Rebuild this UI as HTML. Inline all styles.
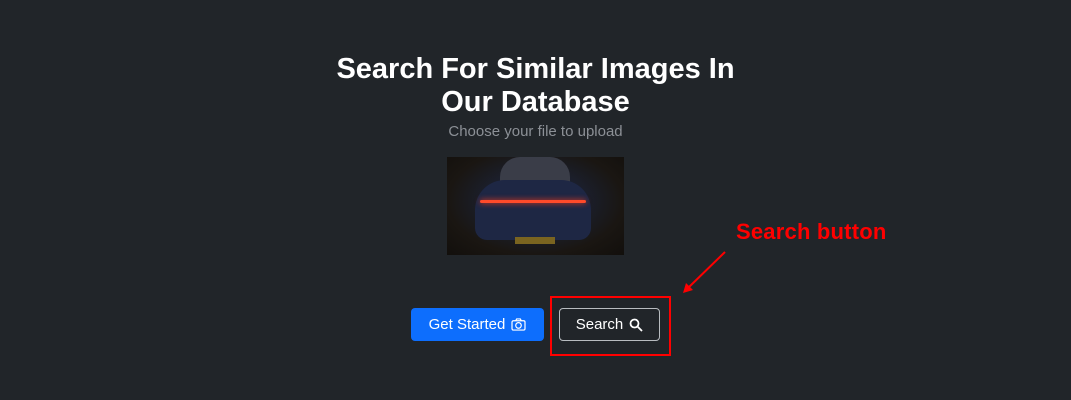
<!DOCTYPE html>
<html><head><style>
body{margin:0;width:1071px;height:400px;background:#212529;font-family:"Liberation Sans","DejaVu Sans",sans-serif;position:relative;overflow:hidden;color:#fff}
.t{position:absolute;left:0;width:1071px;text-align:center;font-weight:bold;font-size:29px;line-height:33px;top:53px}
.s{position:absolute;left:0;width:1071px;text-align:center;font-size:15px;color:#8c9096;top:123px}
.img{position:absolute;left:447px;top:157px;width:177px;height:98px;background:radial-gradient(ellipse at 50% 45%,#2a3350 0,#1b2030 35%,#1a1612 70%,#120f0c 100%)}
.win{position:absolute;left:500px;top:157px;width:70px;height:35px;border-radius:20px 20px 4px 4px;background:#3a3d48}
.car{position:absolute;left:475px;top:180px;width:116px;height:60px;border-radius:30px 30px 12px 12px;background:#1e2744}
.light{position:absolute;left:480px;top:200px;width:106px;height:3px;background:#ff4a2a;border-radius:2px;box-shadow:0 0 6px #ff3a1a}
.plate{position:absolute;left:515px;top:237px;width:40px;height:7px;background:#7a6420}
.b{position:absolute;top:308px;height:33px;border-radius:4px;box-sizing:border-box;font-size:15px;display:flex;align-items:center;justify-content:center;gap:6px}
.g{left:411px;width:133px;background:#0d6efd}
.q{left:559px;width:101px;border:1px solid #b8bcc0}
.box{position:absolute;left:550px;top:296px;width:121px;height:60px;box-sizing:border-box;border:2px solid #f00}
.lab{position:absolute;left:736px;top:219px;color:#f00;font-weight:bold;font-size:22px;letter-spacing:0.2px}
</style></head><body>
<div class="t">Search For Similar Images In<br>Our Database</div>
<div class="s">Choose your file to upload</div>
<div class="img"></div><div class="win"></div><div class="car"></div><div class="light"></div><div class="plate"></div>
<div class="b g">Get Started <svg width="15" height="13" viewBox="0 0 16 14" fill="none" stroke="#fff" stroke-width="1.3"><rect x="1" y="3" width="14" height="10" rx="1.5"/><path d="M5 3l1-2h4l1 2"/><circle cx="8" cy="8" r="3"/></svg></div>
<div class="b q">Search <svg width="14" height="14" viewBox="0 0 14 14" fill="none" stroke="#fff" stroke-width="1.8"><circle cx="5.5" cy="5.5" r="4"/><path d="M8.5 8.5l4.5 4.5"/></svg></div>
<div class="box"></div>
<div class="lab">Search button</div>
<svg style="position:absolute;left:0;top:0" width="1071" height="400"><path d="M725 252L688 288" stroke="#f00" stroke-width="2"/><path d="M683 293l3-10 7 7z" fill="#f00"/></svg>
</body></html>
